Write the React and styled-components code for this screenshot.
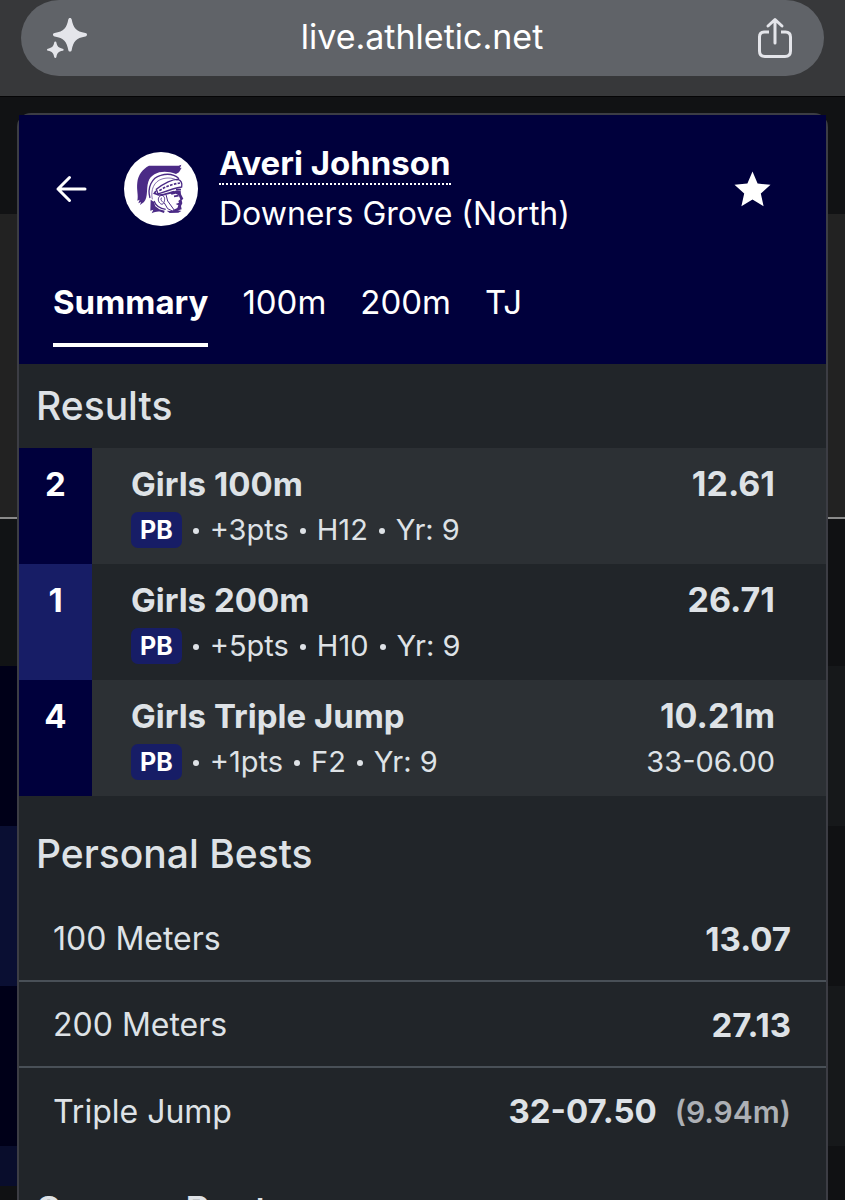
import React from "react";
import styled, { createGlobalStyle } from "styled-components";

const GlobalStyle = createGlobalStyle`
  *, *::before, *::after { box-sizing: border-box; }
  body {
    margin: 0;
    background: #101113;
    font-family: Inter, "Liberation Sans", sans-serif;
    color: #dee2e6;
  }
  button { font: inherit; color: inherit; background: none; border: 0; padding: 0; cursor: pointer; }
  svg { display: block; }
`;

const Screen = styled.div`
  display: flex;
  flex-direction: column;
  height: 100vh;
  overflow: hidden;
`;

/* ---------- browser chrome ---------- */

const BrowserBar = styled.header`
  flex: none;
  padding: 0 21px 20px;
  background: #37383a;
  border-bottom: 1px solid #050506;
`;

const AddressPill = styled.div`
  display: flex;
  align-items: center;
  height: 76px;
  padding: 0 29px 0 24px;
  border-radius: 38px;
  background: #606368;
  color: #e4e5ea;
`;

const AddressInput = styled.input`
  flex: 1;
  min-width: 0;
  height: 48px;
  border: 0;
  padding: 0 0 4px;
  background: none;
  color: #ffffff;
  font: inherit;
  font-size: 34px;
  text-align: center;
`;

const IconButton = styled.button`
  display: flex;
  flex: none;
`;

/* ---------- page dimmed behind the sheet ---------- */

const Stage = styled.main`
  flex: 1;
  min-height: 0;
  display: grid;
  grid-template-columns: minmax(0, 1fr);
  align-items: start;
`;

const Backdrop = styled.div`
  grid-area: 1 / 1;
`;

const BackdropBand = styled.div`
  height: ${(p) => p.$height}px;
  background: linear-gradient(to right, ${(p) => p.$left} 50%, ${(p) => p.$right} 50%);
`;

/* ---------- athlete sheet ---------- */

const Sheet = styled.article`
  grid-area: 1 / 1;
  margin: 16px 17px 0;
  border: 2px solid #3c3d44;
  border-radius: 14px;
  background: #212529;
`;

const SheetHeader = styled.header`
  padding: 26px 34px 17px;
  background: #00003c;
  color: #ffffff;
`;

const Profile = styled.div`
  display: flex;
  align-items: center;
`;

const Identity = styled.div`
  flex: 1;
  min-width: 0;
  margin: 0 20px 0 21px;
`;

const AthleteLink = styled.a`
  display: inline-block;
  height: 44px;
  font-size: 33px;
  line-height: 44px;
  border-bottom: 2px dotted #ffffff;
  color: inherit;
  font-weight: 700;
  text-decoration: none;
`;

const School = styled.div`
  margin-top: 7px;
  font-size: 32px;
  line-height: 44px;
`;

const BackButton = styled(IconButton)`
  margin-right: 34px;
`;

const StarButton = styled(IconButton)`
  margin-right: 21px;
`;

const Tabs = styled.nav`
  display: flex;
  gap: 34px;
  margin-top: 44px;
`;

const Tab = styled.button`
  padding-bottom: 19px;
  border-bottom: 4px solid ${(p) => (p.$active ? "#ffffff" : "transparent")};
  font-size: 33px;
  line-height: 44px;
  font-weight: ${(p) => (p.$active ? 700 : 400)};
`;

const SectionTitle = styled.h2`
  margin: 0;
  padding: ${(p) => (p.$spaced ? "32px 17px 15px" : "16px 17px")};
  font-size: 39px;
  line-height: 52px;
  font-weight: 500;
`;

const DataTable = styled.table`
  width: 100%;
  border-collapse: collapse;
  border-spacing: 0;
  td, th { padding: 0; text-align: left; font-weight: 400; }
`;

const ResultRow = styled.tr`
  height: 116px;
  vertical-align: top;
  background: ${(p) => (p.$shaded ? "#2c3034" : "#212529")};
`;

const Rank = styled.td`
  && {
    width: 73px;
    padding-top: 13px;
    background: ${(p) => (p.$winner ? "#171d66" : "#00003c")};
    color: #ffffff;
    font-size: 33px;
    line-height: 46px;
    font-weight: 700;
    text-align: center;
  }
`;

const EventCell = styled.th`
  && { padding: 13px 0 0 39px; }
`;

const MarkCell = styled.td`
  && { padding: 13px 51px 0 0; text-align: right; }
`;

const Strong = styled.div`
  font-size: ${(p) => (p.$mark ? 34 : 33)}px;
  line-height: 46px;
  font-weight: 700;
`;

const Meta = styled.div`
  display: flex;
  align-items: center;
  justify-content: ${(p) => (p.$end ? "flex-end" : "flex-start")};
  gap: 11px;
  font-size: 29px;
  line-height: 46px;
`;

const Badge = styled.span`
  padding: 0 9px;
  border-radius: 7px;
  background: #171d66;
  color: #ffffff;
  font-size: 25px;
  line-height: 36px;
  font-weight: 700;
`;

const Dot = styled.span`
  width: 6px;
  height: 6px;
  margin-top: 2px;
  border-radius: 50%;
  background: #dee2e6;
`;

const BestRow = styled.tr`
  height: 86px;
  border-bottom: 2px solid #495057;
  font-size: 32px;
  line-height: 46px;
  &:last-child { border-bottom: 0; }
`;

const BestEvent = styled.th`
  && { padding: 2px 0 0 34px; }
`;

const BestMark = styled.td`
  && { padding: 2px 35px 0 0; text-align: right; font-size: 33px; font-weight: 700; }
`;

const Converted = styled.span`
  margin-left: 18px;
  color: #adb0b5;
  font-size: 30px;
  font-weight: 600;
`;

/* ---------- drawings ---------- */

const SparkleIcon = () => (
  <svg width="46" height="46" viewBox="0 0 46 46" fill="currentColor" aria-hidden="true">
    <path d="M25 3c1 0 1.500 .7 1.700 1.600 1.500 8.200 4.300 12 13.700 13.500 1 .2 1.600 .8 1.600 1.700s-.6 1.500-1.600 1.700c-9.400 1.500-12.200 5.300-13.700 13.500-.2 1-.7 1.600-1.700 1.600s-1.500-.6-1.700-1.600c-1.500-8.200-4.300-12-13.700-13.500-1-.2-1.600-.8-1.600-1.700s.6-1.500 1.600-1.700c9.400-1.500 12.200-5.300 13.700-13.500.2-.9.700-1.600 1.700-1.600z" />
    <path d="M10.300 26.500c.6 0 1 .4 1.100 1 .7 3.700 2 5.300 6.200 6.200.7.100 1 .5 1 1s-.3 1-1 1.100c-4.200.8-5.500 2.500-6.200 6.200-.1.700-.5 1-1.100 1s-1-.3-1.100-1c-.7-3.700-2-5.400-6.200-6.200-.7-.1-1-.5-1-1.100s.3-.9 1-1c4.200-.9 5.500-2.500 6.200-6.200.1-.6.5-1 1.100-1z" />
  </svg>
);

const ShareIcon = () => (
  <svg width="42" height="46" viewBox="0 0 42 46" fill="none" stroke="currentColor" strokeWidth="3" aria-hidden="true">
    <path d="M16 17H11.500Q6.500 17 6.500 22V36Q6.500 41.500 12 41.500H32Q37.500 41.500 37.500 36V22Q37.500 17 32.500 17H28" />
    <path d="M22 28V5M15 11L22 4.500 29 11" strokeLinecap="round" strokeLinejoin="round" />
  </svg>
);

const ArrowIcon = () => (
  <svg width="37" height="34" viewBox="0 0 37 34" fill="none" stroke="currentColor" strokeWidth="3" strokeLinecap="round" strokeLinejoin="round" aria-hidden="true">
    <path d="M32 17H5M16.500 5.500L5 17 16.500 28.500" />
  </svg>
);

const StarIcon = () => (
  <svg width="37" height="36" viewBox="0 0 37 36" fill="currentColor" aria-hidden="true">
    <path d="M18.500 .5L23.600 12.500 36.500 13.800 26.800 22.500 29.600 35.200 18.500 28.600 7.400 35.200 10.200 22.500 .5 13.800 13.400 12.500Z" />
  </svg>
);

const TrojanLogo = () => (
  <svg width="74" height="74" viewBox="43 31 222 222" role="img" aria-label="Downers Grove North Trojans">
    <circle cx="154" cy="142" r="111" fill="#ffffff" />
    <g fill="#4b2a86">
      <path d="M118 72H207L215 69 211 80 216 78 208 92 199 97C163 83 126 91 116 120 109 143 116 165 103 181L91 190 94 181 86 185 90 174 83 177C87 162 80 145 83 122 85 100 99 82 118 72Z" />
      <path d="M123 174L133 181 137 194 149 203 165 207 163 214C151 207 139 208 126 215L131 204 122 207Z" />
      <path d="M171 207L184 208 202 205 215 208 206 213 180 214Z" />
      <path d="M180 153L202 146 213 148 214 158 221 171 216 176 218 185 214 193 216 203 199 208 186 207 203 199 206 191 198 187 208 183 206 178 212 173 207 161 198 156 186 159Z" />
    </g>
    <g fill="none" stroke="#4b2a86">
      <path d="M121 169C112 139 126 108 153 101 174 95 195 99 208 111" strokeWidth="4" />
      <path d="M128 173C122 145 133 119 157 112 173 107 190 108 204 117" strokeWidth="2" />
      <path d="M205 113C190 112 163 124 140 143L145 157C168 149 187 141 216 136 218 125 214 116 205 113Z" strokeWidth="4" />
      <path d="M149 147C168 135 184 128 211 124" strokeWidth="5" strokeDasharray="8 4" />
      <path d="M139 148L134 155 147 160C162 161 177 154 194 150" strokeWidth="5" />
      <path d="M157 161C148 162 144 170 147 179 151 187 158 191 162 184 166 175 167 164 157 161Z" strokeWidth="3" />
      <path d="M157 168C150 172 156 178 160 182" strokeWidth="3" />
      <path d="M169 159L174 178 195 207M164 184L174 201 188 208" strokeWidth="3" />
      <path d="M133 178C139 193 151 201 168 203" strokeWidth="4" />
      <path d="M193 164L207 162M199 143L214 144" strokeWidth="5" />
    </g>
  </svg>
);

/* ---------- data ---------- */

const bands = [
  { height: 117, left: "#111214", right: "#111214" },
  { height: 303, left: "#222222", right: "#222222" },
  { height: 2, left: "#8a8a8a", right: "#8a8a8a" },
  { height: 147, left: "#111315", right: "#101113" },
  { height: 160, left: "#000018", right: "#16181a" },
  { height: 160, left: "#0a0f33", right: "#101113" },
  { height: 160, left: "#000018", right: "#16181a" },
  { height: 40, left: "#090d2c", right: "#101113" },
];

const tabs = ["Summary", "100m", "200m", "TJ"];

const results = [
  { place: 2, event: "Girls 100m", details: ["+3pts", "H12", "Yr: 9"], mark: "12.61" },
  { place: 1, event: "Girls 200m", details: ["+5pts", "H10", "Yr: 9"], mark: "26.71" },
  { place: 4, event: "Girls Triple Jump", details: ["+1pts", "F2", "Yr: 9"], mark: "10.21m", alt: "33-06.00" },
];

const bests = [
  { event: "100 Meters", mark: "13.07" },
  { event: "200 Meters", mark: "27.13" },
  { event: "Triple Jump", mark: "32-07.50", converted: "(9.94m)" },
];

export default function App() {
  const [active, setActive] = React.useState("Summary");

  return (
    <Screen>
      <GlobalStyle />
      <BrowserBar>
        <AddressPill>
          <IconButton aria-label="Assistant"><SparkleIcon /></IconButton>
          <AddressInput type="text" aria-label="Address" defaultValue="live.athletic.net" />
          <IconButton aria-label="Share"><ShareIcon /></IconButton>
        </AddressPill>
      </BrowserBar>

      <Stage>
        <Backdrop aria-hidden="true">
          {bands.map((b, i) => (
            <BackdropBand key={i} $height={b.height} $left={b.left} $right={b.right} />
          ))}
        </Backdrop>

        <Sheet>
          <SheetHeader>
            <Profile>
              <BackButton aria-label="Back"><ArrowIcon /></BackButton>
              <TrojanLogo />
              <Identity>
                <AthleteLink href="#athlete">Averi Johnson</AthleteLink>
                <School>Downers Grove (North)</School>
              </Identity>
              <StarButton aria-label="Favorite"><StarIcon /></StarButton>
            </Profile>
            <Tabs>
              {tabs.map((t) => (
                <Tab key={t} $active={t === active} onClick={() => setActive(t)}>{t}</Tab>
              ))}
            </Tabs>
          </SheetHeader>

          <section>
            <SectionTitle>Results</SectionTitle>
            <DataTable>
              <tbody>
                {results.map((r, i) => (
                  <ResultRow key={r.event} $shaded={i % 2 === 0}>
                    <Rank $winner={r.place === 1}>{r.place}</Rank>
                    <EventCell scope="row">
                      <Strong>{r.event}</Strong>
                      <Meta>
                        <Badge>PB</Badge>
                        {r.details.map((d) => (
                          <React.Fragment key={d}>
                            <Dot />
                            <span>{d}</span>
                          </React.Fragment>
                        ))}
                      </Meta>
                    </EventCell>
                    <MarkCell>
                      <Strong $mark>{r.mark}</Strong>
                      {r.alt && <Meta $end>{r.alt}</Meta>}
                    </MarkCell>
                  </ResultRow>
                ))}
              </tbody>
            </DataTable>
          </section>

          <section>
            <SectionTitle $spaced>Personal Bests</SectionTitle>
            <DataTable>
              <tbody>
                {bests.map((b) => (
                  <BestRow key={b.event}>
                    <BestEvent scope="row">{b.event}</BestEvent>
                    <BestMark>
                      {b.mark}
                      {b.converted && <Converted>{b.converted}</Converted>}
                    </BestMark>
                  </BestRow>
                ))}
              </tbody>
            </DataTable>
          </section>

          <section>
            <SectionTitle $spaced>Season Bests</SectionTitle>
          </section>
        </Sheet>
      </Stage>
    </Screen>
  );
}
